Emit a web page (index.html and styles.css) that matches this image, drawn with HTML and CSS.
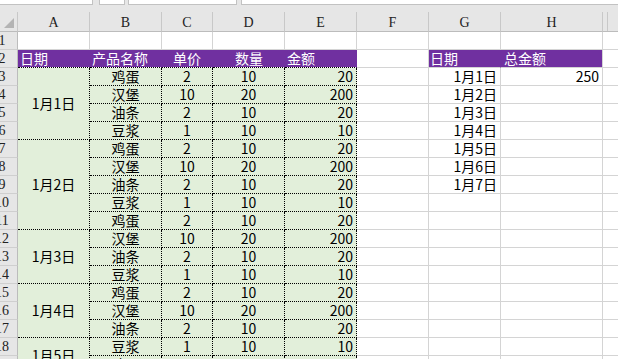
FILE: index.html
```html
<!DOCTYPE html>
<html lang="zh-CN">
<head>
  <meta charset="UTF-8" />
  <title>销售明细</title>
  <link rel="stylesheet" href="styles.css">
</head>
<body>
  <!-- name box / formula bar edges -->
  <div class="topbar">
    <span class="box b1"></span>
    <span class="box b2"></span>
    <span class="box b3"></span>
    <span class="box b4"></span>
  </div>

  <div class="sheet">
    <!-- column headers -->
    <div class="corner">
      <svg width="18" height="19" viewBox="0 0 18 19"><polygon points="14,6 14,16 4,16" fill="#b4b4b4"/></svg>
    </div>
    <div class="colhead">A</div>
    <div class="colhead">B</div>
    <div class="colhead">C</div>
    <div class="colhead">D</div>
    <div class="colhead">E</div>
    <div class="colhead">F</div>
    <div class="colhead">G</div>
    <div class="colhead">H</div>
    <div class="colhead edge"></div>

    <!-- row 1 -->
    <div class="rowhead"><span>1</span></div>
    <div></div><div></div><div></div><div></div><div></div><div></div><div></div><div></div><div class="last"></div>

    <!-- row 2: titles -->
    <div class="rowhead"><span>2</span></div>
    <div class="hd">日期</div>
    <div class="hd">产品名称</div>
    <div class="hd hd-c">单价</div>
    <div class="hd hd-d">数量</div>
    <div class="hd">金额</div>
    <div></div>
    <div class="hd hd-g">日期</div>
    <div class="hd hd-h">总金额</div>
    <div class="last"></div>

    <!-- row 3 -->
    <div class="rowhead"><span>3</span></div>
    <div class="g date span4">1月1日</div>
    <div class="g ctr">鸡蛋</div><div class="g ctr">2</div><div class="g ctr">10</div><div class="g num">20</div>
    <div></div><div class="num">1月1日</div><div class="num">250</div><div class="last"></div>

    <!-- row 4 -->
    <div class="rowhead"><span>4</span></div>
    <div class="g ctr">汉堡</div><div class="g ctr">10</div><div class="g ctr">20</div><div class="g num">200</div>
    <div></div><div class="num">1月2日</div><div></div><div class="last"></div>

    <!-- row 5 -->
    <div class="rowhead"><span>5</span></div>
    <div class="g ctr">油条</div><div class="g ctr">2</div><div class="g ctr">10</div><div class="g num">20</div>
    <div></div><div class="num">1月3日</div><div></div><div class="last"></div>

    <!-- row 6 -->
    <div class="rowhead"><span>6</span></div>
    <div class="g ctr">豆浆</div><div class="g ctr">1</div><div class="g ctr">10</div><div class="g num">10</div>
    <div></div><div class="num">1月4日</div><div></div><div class="last"></div>

    <!-- row 7 -->
    <div class="rowhead"><span>7</span></div>
    <div class="g date span5">1月2日</div>
    <div class="g ctr">鸡蛋</div><div class="g ctr">2</div><div class="g ctr">10</div><div class="g num">20</div>
    <div></div><div class="num">1月5日</div><div></div><div class="last"></div>

    <!-- row 8 -->
    <div class="rowhead"><span>8</span></div>
    <div class="g ctr">汉堡</div><div class="g ctr">10</div><div class="g ctr">20</div><div class="g num">200</div>
    <div></div><div class="num">1月6日</div><div></div><div class="last"></div>

    <!-- row 9 -->
    <div class="rowhead"><span>9</span></div>
    <div class="g ctr">油条</div><div class="g ctr">2</div><div class="g ctr">10</div><div class="g num">20</div>
    <div></div><div class="num">1月7日</div><div></div><div class="last"></div>

    <!-- row 10 -->
    <div class="rowhead"><span>10</span></div>
    <div class="g ctr">豆浆</div><div class="g ctr">1</div><div class="g ctr">10</div><div class="g num">10</div>
    <div></div><div></div><div></div><div class="last"></div>

    <!-- row 11 -->
    <div class="rowhead"><span>11</span></div>
    <div class="g ctr">鸡蛋</div><div class="g ctr">2</div><div class="g ctr">10</div><div class="g num">20</div>
    <div></div><div></div><div></div><div class="last"></div>

    <!-- row 12 -->
    <div class="rowhead"><span>12</span></div>
    <div class="g date span3">1月3日</div>
    <div class="g ctr">汉堡</div><div class="g ctr">10</div><div class="g ctr">20</div><div class="g num">200</div>
    <div></div><div></div><div></div><div class="last"></div>

    <!-- row 13 -->
    <div class="rowhead"><span>13</span></div>
    <div class="g ctr">油条</div><div class="g ctr">2</div><div class="g ctr">10</div><div class="g num">20</div>
    <div></div><div></div><div></div><div class="last"></div>

    <!-- row 14 -->
    <div class="rowhead"><span>14</span></div>
    <div class="g ctr">豆浆</div><div class="g ctr">1</div><div class="g ctr">10</div><div class="g num">10</div>
    <div></div><div></div><div></div><div class="last"></div>

    <!-- row 15 -->
    <div class="rowhead"><span>15</span></div>
    <div class="g date span3">1月4日</div>
    <div class="g ctr">鸡蛋</div><div class="g ctr">2</div><div class="g ctr">10</div><div class="g num">20</div>
    <div></div><div></div><div></div><div class="last"></div>

    <!-- row 16 -->
    <div class="rowhead"><span>16</span></div>
    <div class="g ctr">汉堡</div><div class="g ctr">10</div><div class="g ctr">20</div><div class="g num">200</div>
    <div></div><div></div><div></div><div class="last"></div>

    <!-- row 17 -->
    <div class="rowhead"><span>17</span></div>
    <div class="g ctr">油条</div><div class="g ctr">2</div><div class="g ctr">10</div><div class="g num">20</div>
    <div></div><div></div><div></div><div class="last"></div>

    <!-- row 18 -->
    <div class="rowhead"><span>18</span></div>
    <div class="g date span2">1月5日</div>
    <div class="g ctr">豆浆</div><div class="g ctr">1</div><div class="g ctr">10</div><div class="g num">10</div>
    <div></div><div></div><div></div><div class="last"></div>

    <!-- row 19 -->
    <div class="rowhead"><span>19</span></div>
    <div class="g ctr">鸡蛋</div><div class="g ctr">2</div><div class="g ctr">10</div><div class="g num">20</div>
    <div></div><div></div><div></div><div class="last"></div>
  </div>
</body>
</html>
```

FILE: styles.css
```css
html, body {
  margin: 0;
  height: 100%;
  overflow: hidden;
}

body {
  background: #fff;
  color: #000;
  font-family: "Noto Sans CJK SC", sans-serif;
  font-size: 14px;
}

/* strip above the column letters */
.topbar {
  display: flex;
  height: 12px;
  background: #e6e6e6;
}

.box {
  height: 4px;
  background: #fff;
  border-bottom: 1px solid #c2c2c2;
}

.b1 { width: 92px; border-right: 1px solid #c2c2c2; }
.b2 { width: 24px; margin-left: 6px; border-left: 1px solid #c2c2c2; border-right: 1px solid #c2c2c2; }
.b3 { width: 107px; margin-left: 3px; border-left: 1px solid #c2c2c2; border-right: 1px solid #c2c2c2; }
.b4 { flex: 1; margin-left: 4px; border-left: 1px solid #c2c2c2; }

/* worksheet grid */
.sheet {
  display: grid;
  grid-template-columns: 18px 72px 72px 51px 72px 72px 72px 72px 102px 15px;
  grid-template-rows: 20px;
  grid-auto-rows: 18px;
}

.sheet > div {
  box-sizing: border-box;
  border-right: 1px solid #d4d4d4;
  border-bottom: 1px solid #d4d4d4;
  line-height: 17px;
  white-space: nowrap;
  overflow: hidden;
}

.sheet > .last {
  border-right: none;
}

.corner,
.colhead,
.rowhead {
  background: #e6e6e6;
  color: #222;
  font-family: "Liberation Serif", serif;
  font-size: 14px;
}

.sheet > .corner,
.sheet > .colhead {
  border-right-color: #c8c8c8;
  border-bottom-color: #bcbcbc;
  line-height: 22px;
  text-align: center;
}

.sheet > .colhead.edge {
  border-right: none;
  background: linear-gradient(to right, #e6e6e6 4px, #c8c8c8 4px, #c8c8c8 5px, #e6e6e6 5px);
}

.corner svg {
  display: block;
}

.sheet > .rowhead {
  border-right-color: #bcbcbc;
  border-bottom-color: #cfcfcf;
  line-height: 18px;
}

/* numbers are centred on a wider header that starts off screen */
.rowhead span {
  display: block;
  width: 26px;
  margin-left: -11px;
  text-align: center;
}

/* purple title cells */
.sheet > .hd {
  background: #7030a0;
  background-clip: padding-box;
  color: #fff;
  padding-left: 2px;
  border-right: 1px solid #7030a0;
  border-bottom: 1px dotted #000;
}

.sheet > .hd-c { padding-left: 11px; }
.sheet > .hd-d { padding-left: 22px; }
.sheet > .hd-g { padding-left: 1px; border-bottom: 1px solid #d4d4d4; }
.sheet > .hd-h { padding-left: 3px; border-right-color: #d4d4d4; border-bottom: 1px solid #d4d4d4; }

/* green data block */
.sheet > .g {
  background: #e2efda;
  border-right: 1px dotted #000;
  border-bottom: 1px dotted #000;
}

.ctr { text-align: center; }

.num {
  text-align: right;
  padding-right: 3px;
}

.sheet > .date {
  display: flex;
  align-items: center;
  justify-content: center;
}

.span2 { grid-row: span 2; }
.span3 { grid-row: span 3; }
.span4 { grid-row: span 4; }
.span5 { grid-row: span 5; }
```
